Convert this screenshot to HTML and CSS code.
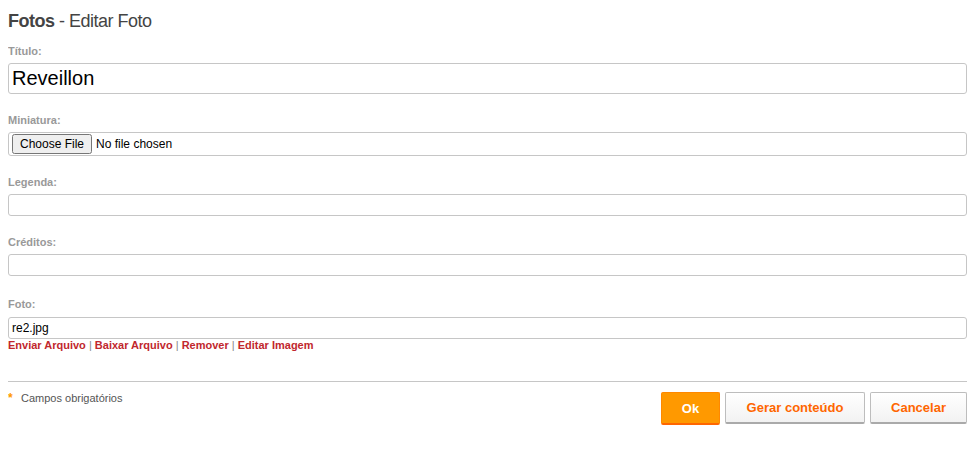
FILE: index.html
```html
<!DOCTYPE html>
<html lang="pt">
<head>
<meta charset="utf-8">
<title>Fotos - Editar Foto</title>
<link rel="stylesheet" href="styles.css">
</head>
<body>
<h1 class="page-title"><strong>Fotos</strong> - Editar Foto</h1>
<form class="form">
  <div class="field">
    <label class="label" for="titulo">Título:</label>
    <input class="input input-lg" id="titulo" type="text" value="Reveillon">
  </div>
  <div class="field">
    <label class="label" for="miniatura">Miniatura:</label>
    <div class="file-box"><input class="file" id="miniatura" type="file"></div>
  </div>
  <div class="field">
    <label class="label" for="legenda">Legenda:</label>
    <input class="input" id="legenda" type="text">
  </div>
  <div class="field">
    <label class="label" for="creditos">Créditos:</label>
    <input class="input" id="creditos" type="text">
  </div>
  <div class="field field-foto">
    <label class="label" for="foto">Foto:</label>
    <input class="input" id="foto" type="text" value="re2.jpg">
    <div class="links">
      <a href="#">Enviar Arquivo</a> <span class="sep">|</span>
      <a href="#">Baixar Arquivo</a> <span class="sep">|</span>
      <a href="#">Remover</a> <span class="sep">|</span>
      <a href="#">Editar Imagem</a>
    </div>
  </div>
  <div class="footer">
    <p class="required"><span class="star">*</span>Campos obrigatórios</p>
    <div class="actions">
      <button type="button" class="btn btn-primary btn-ok">Ok</button>
      <button type="button" class="btn btn-gerar">Gerar conteúdo</button>
      <button type="button" class="btn btn-cancel">Cancelar</button>
    </div>
  </div>
</form>
</body>
</html>
```
FILE: styles.css
```css
* { box-sizing: border-box; }
html, body { background: #fff; }
body {
  margin: 8px;
  font-family: "Liberation Sans", Arial, sans-serif;
  color: #333;
}
.page-title {
  margin: 1px 0 0;
  font-size: 18px;
  line-height: 24px;
  font-weight: normal;
  color: #444;
  letter-spacing: -0.5px;
}
.page-title strong { font-weight: bold; }
.form {
  margin-top: 11px;
  width: 959px;
}
.field { margin-bottom: 19px; }
.label {
  display: block;
  font-size: 11px;
  line-height: 14px;
  font-weight: bold;
  color: #999;
  margin-bottom: 5px;
}
.input {
  display: block;
  width: 100%;
  height: 22px;
  border: 1px solid #c6c6c6;
  border-radius: 3px;
  padding: 0 3px;
  font-family: "Liberation Sans", Arial, sans-serif;
  font-size: 12px;
  color: #000;
  background: #fff;
  outline: none;
}
.input-lg {
  height: 31px;
  font-size: 20px;
  padding: 0 3px;
}
.file-box {
  height: 24px;
  border: 1px solid #c6c6c6;
  border-radius: 3px;
  padding: 1px 3px;
  display: flex;
  align-items: center;
}
.file {
  font-family: "Liberation Sans", Arial, sans-serif;
  font-size: 12px;
  color: #000;
}
.field-foto { margin-top: 21px; margin-bottom: 30px; }
.field-foto .label { margin-bottom: 6px; }
.links {
  font-size: 11px;
  line-height: 12px;
  font-weight: bold;
  color: #999;
}
.links a {
  color: #c1272d;
  text-decoration: none;
}
.links .sep { font-weight: normal; color: #888; }
.footer {
  border-top: 1px solid #c6c6c6;
  display: flex;
  justify-content: space-between;
  align-items: flex-start;
  padding-top: 10px;
}
.required {
  margin: 0;
  font-size: 11px;
  line-height: 12px;
  color: #555;
}
.star {
  display: inline-block;
  color: #f90;
  font-weight: bold;
  font-size: 12px;
  line-height: 12px;
  vertical-align: top;
  width: 13px;
}
.actions {
  display: flex;
  gap: 5px;
}
.btn {
  font-family: "Liberation Sans", Arial, sans-serif;
  font-size: 13px;
  font-weight: bold;
  color: #f60;
  height: 32px;
  padding: 0;
  border: 1px solid #bdbdbd;
  border-bottom: 2px solid #aaa;
  border-radius: 2px;
  background: linear-gradient(#fff, #f2f2f2);
  cursor: pointer;
}
.btn-primary {
  color: #fff;
  background: #ff9900;
  border: 1px solid #f80;
  border-bottom: 2px solid #f60;
  height: 33px;
}
.btn-ok { width: 59px; }
.btn-gerar { width: 140px; }
.btn-cancel { width: 97px; }
```
